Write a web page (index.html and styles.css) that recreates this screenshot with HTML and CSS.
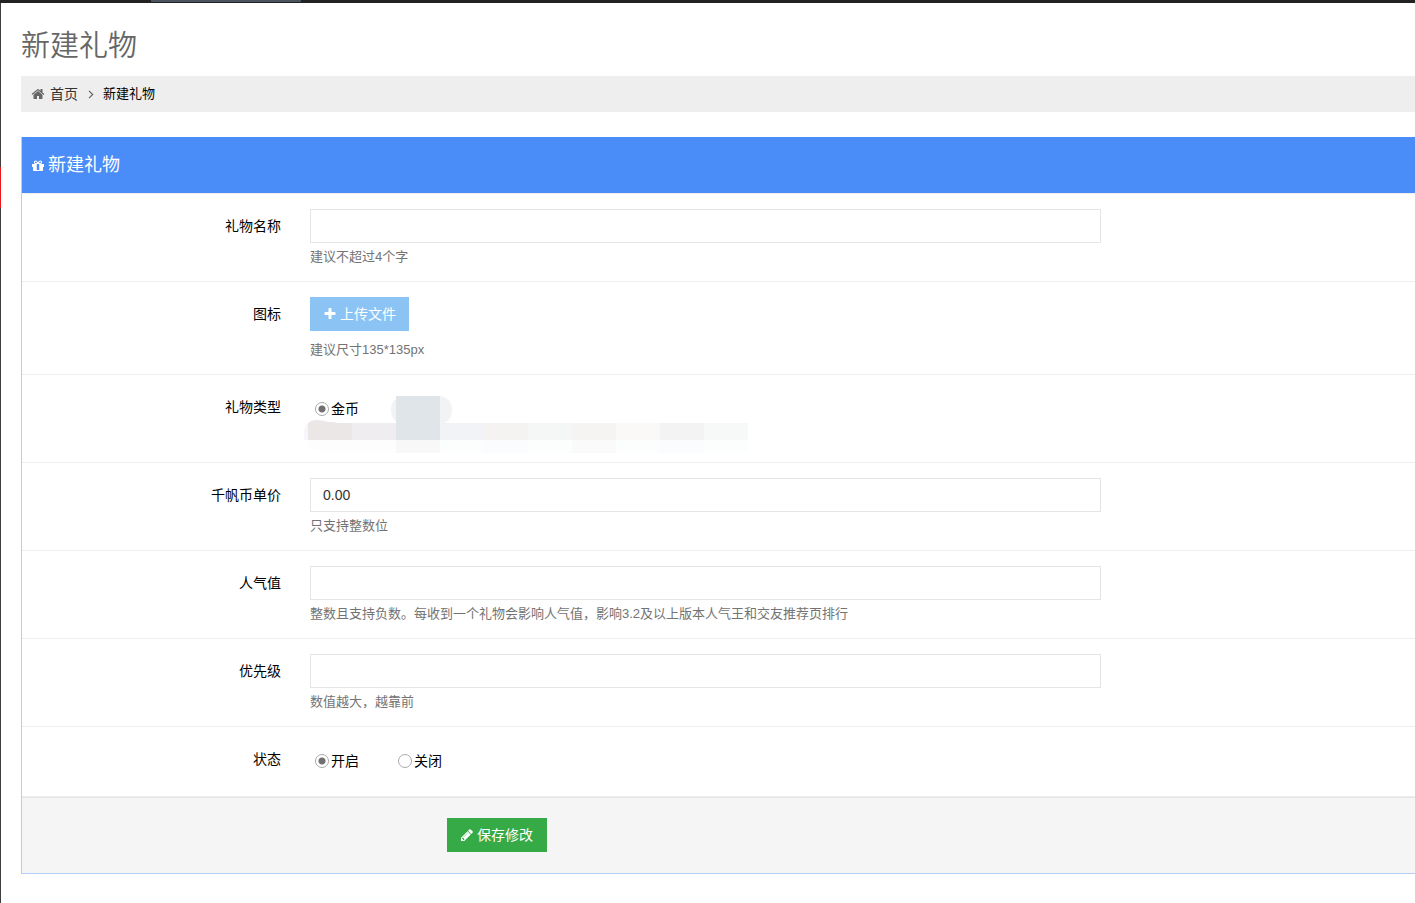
FILE: index.html
```html
<!DOCTYPE html>
<html lang="zh-CN">
<head>
<meta charset="utf-8">
<title>新建礼物</title>
<link rel="stylesheet" href="styles.css">
</head>
<body>
<div class="topbar"><div class="topbar-tab"></div></div>
<div class="page">
  <div class="sidebar-edge"></div>
  <main class="content">
    <h1 class="page-title">新建礼物</h1>
    <nav class="breadcrumb" aria-label="breadcrumb">
      <svg class="icon icon-home" viewBox="0 0 1792 1792" aria-hidden="true"><path d="M1472 992v480q0 26-19 45t-45 19h-384v-384h-256v384h-384q-26 0-45-19t-19-45v-480q0-1 .5-3t.5-3l575-474 575 474q1 2 1 6zm223-69l-62 74q-8 9-21 11h-3q-13 0-21-7l-692-577-692 577q-12 8-24 7-13-2-21-11l-62-74q-8-10-7-23.5t11-21.5l719-599q32-26 76-26t76 26l244 204v-195q0-14 9-23t23-9h192q14 0 23 9t9 23v408l219 182q10 8 11 21.500t-7 23.500z"/></svg>
      <a href="#">首页</a>
      <svg class="icon-angle" viewBox="0 0 6 9" aria-hidden="true"><path d="M1 .8 4.7 4.5 1 8.2"/></svg>
      <a class="current" href="#">新建礼物</a>
    </nav>
    <section class="panel">
      <header class="panel-head">
        <svg class="icon icon-gift" viewBox="0 0 1792 1792" aria-hidden="true"><path d="M1056 1356v-716h-320v716q0 25 18 38.500t46 13.500h192q28 0 46-13.500t18-38.500zm-456-844h195l-126-161q-26-31-69-31-40 0-68 28t-28 68 28 68 68 28zm688-96q0-40-28-68t-68-28q-43 0-69 31l-125 161h194q40 0 68-28t28-68zm376 256v320q0 14-9 23t-23 9h-96v416q0 40-28 68t-68 28h-1088q-40 0-68-28t-28-68v-416h-96q-14 0-23-9t-9-23v-320q0-14 9-23t23-9h440q-93 0-158.500-65.500t-65.500-158.500 65.500-158.500 158.500-65.500q107 0 168 77l128 165 128-165q61-77 168-77 93 0 158.500 65.500t65.500 158.500-65.500 158.500-158.500 65.500h440q14 0 23 9t9 23z"/></svg>
        <h2>新建礼物</h2>
      </header>
      <form>
        <div class="row">
          <label class="label" for="name">礼物名称</label>
          <div class="field">
            <input class="text" id="name" type="text">
            <p class="help">建议不超过4个字</p>
          </div>
        </div>
        <div class="row">
          <label class="label" for="upload">图标</label>
          <div class="field">
            <button class="btn btn-upload" id="upload" type="button">
              <svg class="icon" viewBox="0 0 1792 1792" aria-hidden="true"><path d="M1600 736v192q0 40-28 68t-68 28h-416v416q0 40-28 68t-68 28h-192q-40 0-68-28t-28-68v-416h-416q-40 0-68-28t-28-68v-192q0-40 28-68t68-28h416v-416q0-40 28-68t68-28h192q40 0 68 28t28 68v416h416q40 0 68 28t28 68z"/></svg>
              上传文件
            </button>
            <p class="help help-spaced">建议尺寸135*135px</p>
          </div>
        </div>
        <div class="row row-type" role="radiogroup" aria-labelledby="type-label">
          <span class="label" id="type-label">礼物类型</span>
          <div class="field">
            <div class="radios">
              <label class="radio"><input type="radio" name="type" checked>金币</label>
            </div>
            <svg class="mosaic" viewBox="0 0 444 60" aria-hidden="true">
              <rect x="87" y="3" width="61" height="28" rx="13" fill="#f2f3f5"/>
              <path d="M0 47V40Q0 33 4 30V47z" fill="#f7f7fb"/>
              <path d="M4 47V30q3-3 9-3l8 1 3 1h6l3 1h15V47z" fill="#ebe7e7"/>
              <path d="M48 30h44v17H48z" fill="#efedef"/>
              <path d="M136 30h44v17h-44z" fill="#f1f3f6"/>
              <path d="M180 30h44v17h-44z" fill="#f5f3f2"/>
              <path d="M224 30h44v17h-44z" fill="#f5f7f7"/>
              <path d="M268 30h44v17h-44z" fill="#f5f4f3"/>
              <path d="M312 30h44v17h-44z" fill="#faf9f7"/>
              <path d="M356 30h44v17h-44z" fill="#f3f3f4"/>
              <path d="M400 30h44v17h-44z" fill="#f7f8f8"/>
              <path d="M4 47h88v13H40Q10 58 4 54z" fill="#fdfdfd"/>
              <path d="M92 47h44v13H92z" fill="#f8f8f8"/>
              <path d="M136 47h308v13H136z" fill="#fcfdfd"/>
              <path d="M180 47h44v13h-44zM356 47h44v13h-44z" fill="#fafcfe"/>
              <path d="M268 47h44v13h-44z" fill="#fafafb"/>
              <path d="M92 3h44v44H92z" fill="#dfe5e8"/>
            </svg>
          </div>
        </div>
        <div class="row">
          <label class="label" for="price">千帆币单价</label>
          <div class="field">
            <input class="text" id="price" type="text" value="0.00">
            <p class="help">只支持整数位</p>
          </div>
        </div>
        <div class="row">
          <label class="label" for="popularity">人气值</label>
          <div class="field">
            <input class="text" id="popularity" type="text">
            <p class="help">整数且支持负数。每收到一个礼物会影响人气值，影响3.2及以上版本人气王和交友推荐页排行</p>
          </div>
        </div>
        <div class="row">
          <label class="label" for="priority">优先级</label>
          <div class="field">
            <input class="text" id="priority" type="text">
            <p class="help">数值越大，越靠前</p>
          </div>
        </div>
        <div class="row row-status" role="radiogroup" aria-labelledby="status-label">
          <span class="label" id="status-label">状态</span>
          <div class="field">
            <div class="radios">
              <label class="radio"><input type="radio" name="status" checked>开启</label>
              <label class="radio"><input type="radio" name="status">关闭</label>
            </div>
          </div>
        </div>
        <div class="actions">
          <button class="btn btn-save" type="submit">
            <svg class="icon" viewBox="0 0 1792 1792" aria-hidden="true"><path d="M491 1536l91-91-235-235-91 91v107h128v128h107zm523-928q0-22-22-22-10 0-17 7l-542 542q-7 7-7 17 0 22 22 22 10 0 17-7l542-542q7-7 7-17zm-54-192l416 416-832 832h-416v-416zm683 96q0 53-37 90l-166 166-416-416 166-165q36-38 90-38 53 0 91 38l235 234q37 39 37 91z"/></svg>
            保存修改
          </button>
        </div>
      </form>
    </section>
  </main>
</div>
</body>
</html>
```
FILE: styles.css
```css
* {
  box-sizing: border-box;
}

body {
  margin: 0;
  min-height: 100vh;
  display: flex;
  flex-direction: column;
  background: #fff;
  color: #000;
  font-family: "Liberation Sans", "Noto Sans CJK SC", sans-serif;
  font-size: 14px;
  line-height: 20px;
}

.topbar {
  height: 3px;
  background: #222;
  padding-left: 151px;
}

.topbar-tab {
  width: 150px;
  height: 2px;
  background: #4b535e;
}

.page {
  flex: 1;
  display: flex;
}

.sidebar-edge {
  width: 1px;
  background: linear-gradient(#3d3d3d 164px, #e9191c 164px, #e9191c 205px, #3d3d3d 205px);
}

.content {
  flex: 1;
  min-width: 0;
  padding: 23px 0 29px 20px;
}

.page-title {
  margin: 0 0 10px;
  font-size: 29px;
  line-height: 40px;
  font-weight: 350;
  color: #666;
}

.breadcrumb {
  display: flex;
  align-items: center;
  height: 36px;
  margin-bottom: 25px;
  padding-left: 10px;
  background: #eee;
}

.breadcrumb a {
  color: #333;
  text-decoration: none;
}

.breadcrumb .current {
  color: #000;
  font-size: 13px;
}

.icon {
  width: 14px;
  height: 14px;
  fill: #fff;
}

.icon-home {
  margin-right: 5px;
  fill: #666;
}

.icon-angle {
  width: 6px;
  height: 9px;
  margin: 0 9px 0 10px;
  fill: none;
  stroke: #666;
  stroke-width: 1.2;
}

.panel {
  border: solid #b4cef8;
  border-width: 0 0 1px 1px;
}

.panel-head {
  display: flex;
  align-items: center;
  gap: 3px;
  height: 57px;
  padding-left: 9px;
  background: #4b8df8;
  border-bottom: 1px solid #eee;
  color: #fff;
}

.panel-head h2 {
  margin: 0;
  font-size: 18px;
  line-height: 24px;
  font-weight: 400;
}

.icon-gift {
  margin-top: 2px;
}

.row {
  display: grid;
  grid-template-columns: 259px minmax(0, 1fr);
  column-gap: 29px;
  padding: 15px 0 14px;
  border-bottom: 1px solid #eee;
}

.label {
  padding-top: 7px;
  text-align: right;
}

.field {
  position: relative;
}

.text {
  display: block;
  width: 100%;
  max-width: 791px;
  height: 34px;
  padding: 6px 12px;
  border: 1px solid #e5e5e5;
  background: #fff;
  color: #333;
  font: inherit;
}

.help {
  margin: 4px 0 0;
  font-size: 13px;
  color: #737373;
}

.help-spaced {
  margin-top: 9px;
}

.btn {
  display: flex;
  align-items: center;
  gap: 3px;
  height: 34px;
  padding: 0 13px;
  border: 0;
  color: #fff;
  font: inherit;
}

.btn-upload {
  background: #8bc3f5;
}

.btn-save {
  padding-right: 14px;
  background: #35aa47;
}

.row-type {
  min-height: 88px;
}

.row-status {
  min-height: 70px;
}

.radios {
  display: flex;
  gap: 39px;
  padding: 9px 0 0 5px;
}

.radio {
  display: flex;
  align-items: center;
  gap: 2px;
}

.radio input {
  appearance: none;
  width: 14px;
  height: 14px;
  margin: 0;
  border: 1px solid #aaa;
  border-radius: 50%;
  background: #fff;
}

.radio input:checked {
  background: radial-gradient(circle, #707070 3px, #fff 4px);
}

.mosaic {
  position: absolute;
  left: -6px;
  top: 3px;
  width: 444px;
  height: 60px;
}

.actions {
  padding: 20px 0 21px 425px;
  border-top: 1px solid #e5e5e5;
  background: #f5f5f5;
}
```
